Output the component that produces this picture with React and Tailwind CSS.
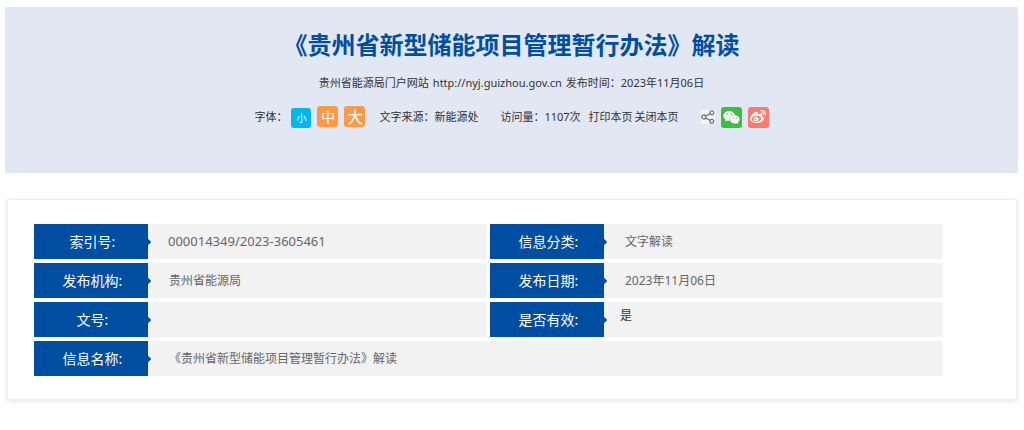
import React from "react";
import { FaWeixin, FaWeibo } from "react-icons/fa";

function ShareIcon() {
  return (
    <svg viewBox="0 0 14 14" className="size-3.5 bg-[#f4f4f4]" fill="none" stroke="#777" strokeWidth="1.3" aria-hidden="true">
      <circle cx="2.9" cy="7" r="2" />
      <circle cx="10.8" cy="2.7" r="1.9" />
      <circle cx="10.8" cy="11.3" r="1.9" />
      <path d="M4.7 6L9.1 3.6M4.7 8L9.1 10.4" />
    </svg>
  );
}

function Field({ label, value, wide, valueClass = "pt-px pl-[21px] items-center text-xs text-[#666]" }) {
  return (
    <div className={wide ? "col-span-2 flex h-[35px] bg-[#f2f2f2]" : "flex h-[35px] bg-[#f2f2f2]"}>
      <dt className="relative flex w-[114px] shrink-0 items-center justify-center bg-[#004ea2] pl-[3px] text-sm text-white">
        {label}
        <span className="absolute top-[15px] -right-0.5 size-1.5 rotate-45 bg-[#004ea2]" />
      </dt>
      <dd className={"flex min-w-0 flex-1 " + valueClass}>{value}</dd>
    </div>
  );
}

export default function App() {
  return (
    <div className="pt-[7px] pr-1.5 pb-7 pl-[5px] font-['Noto_Sans','Noto_Sans_CJK_SC',sans-serif] text-[#333]">
      <header className="h-[166px] bg-[#e1e7f3] pt-5 text-center">
        <h1 className="text-2xl leading-9 font-bold text-[#004ea2]">《贵州省新型储能项目管理暂行办法》解读</h1>
        <div className="mt-2.5 flex justify-center gap-1 text-[11px] leading-5">
          <span>贵州省能源局门户网站</span>
          <span>http://nyj.guizhou.gov.cn</span>
          <span>发布时间：2023年11月06日</span>
        </div>
        <div className="mt-3 flex items-center justify-center text-[11px] leading-6">
          <span>字体：</span>
          <div className="ml-1 flex gap-1.5 text-white">
            <button type="button" className="mt-0.5 size-5 rounded-[3px] bg-[#00b7ee] text-[10px] leading-5">小</button>
            <button type="button" className="size-[21px] rounded-[3px] bg-[#ff9947] text-sm leading-5">中</button>
            <button type="button" className="size-[21px] rounded-[3px] bg-[#ff9947] text-base leading-5">大</button>
          </div>
          <span className="ml-3.5">文字来源：新能源处</span>
          <span className="ml-[22px]">访问量：1107次</span>
          <a href="#print" className="ml-2">打印本页</a>
          <a href="#close" className="ml-0.5">关闭本页</a>
          <div className="ml-[22px] flex items-center gap-1.5">
            <button type="button" aria-label="分享"><ShareIcon /></button>
            <button type="button" aria-label="微信" className="flex size-[21px] items-center justify-center rounded-[3px] bg-[#3bbf43] text-white">
              <FaWeixin className="size-[17px]" />
            </button>
            <button type="button" aria-label="微博" className="flex size-[21px] items-center justify-center rounded-[3px] bg-[#f97b6d] text-white">
              <FaWeibo className="size-4" />
            </button>
          </div>
        </div>
      </header>

      <main className="mt-[26px] mr-px ml-0.5 border border-[#eee] pt-6 pr-[73px] pb-[23px] pl-[26px] shadow-[0_1px_5px_rgba(0,0,0,0.12)]">
        <dl className="grid grid-cols-2 gap-x-[3px] gap-y-1">
          <Field label="索引号:" value="000014349/2023-3605461" valueClass="pt-px pl-5 items-center text-[13px] text-[#666]" />
          <Field label="信息分类:" value="文字解读" />
          <Field label="发布机构:" value="贵州省能源局" />
          <Field label="发布日期:" value="2023年11月06日" />
          <Field label="文号:" value="" />
          <Field label="是否有效:" value="是" valueClass="pt-1 pl-4 items-start text-xs leading-5 text-[#333]" />
          <Field wide label="信息名称:" value="《贵州省新型储能项目管理暂行办法》解读" />
        </dl>
      </main>
    </div>
  );
}
